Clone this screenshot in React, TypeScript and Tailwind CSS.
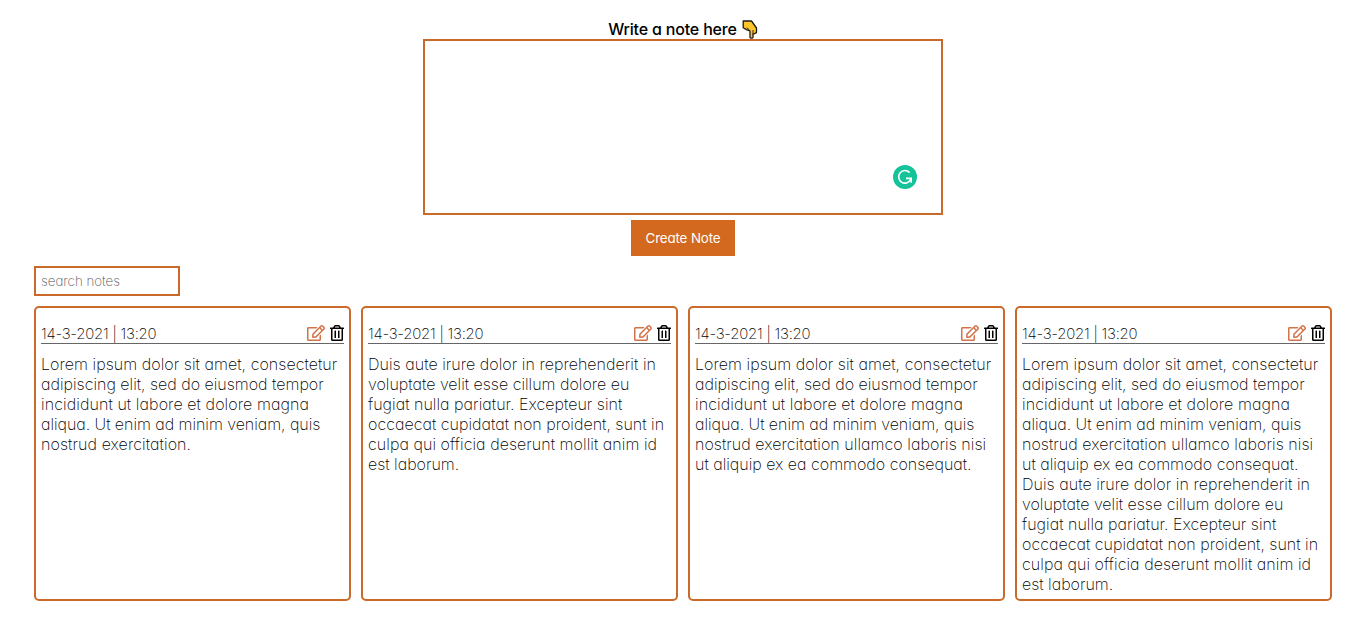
import { FaRegEdit, FaRegTrashAlt } from "react-icons/fa";

type Line = { text: string; spacing?: string };

const lorem: Line[] = [
  { text: "Lorem ipsum dolor sit amet, consectetur", spacing: "tracking-[0.05px]" },
  { text: "adipiscing elit, sed do eiusmod tempor" },
  { text: "incididunt ut labore et dolore magna", spacing: "tracking-[0.09px]" },
  { text: "aliqua. Ut enim ad minim veniam, quis", spacing: "tracking-[-0.04px]" },
];
const ullamco: Line[] = [
  { text: "nostrud exercitation ullamco laboris nisi", spacing: "tracking-[0.05px]" },
  { text: "ut aliquip ex ea commodo consequat." },
];
const duis: Line[] = [
  { text: "Duis aute irure dolor in reprehenderit in", spacing: "tracking-[0.04px]" },
  { text: "voluptate velit esse cillum dolore eu" },
  { text: "fugiat nulla pariatur. Excepteur sint", spacing: "tracking-[0.03px]" },
  { text: "occaecat cupidatat non proident, sunt in", spacing: "tracking-[0.02px]" },
  { text: "culpa qui officia deserunt mollit anim id", spacing: "tracking-[0.05px]" },
  { text: "est laborum." },
];

const notes: Line[][] = [
  [...lorem, { text: "nostrud exercitation.", spacing: "tracking-[0.09px]" }],
  duis,
  [...lorem, ...ullamco],
  [...lorem, ...ullamco, ...duis],
];

function PointingHand() {
  return (
    <svg viewBox="0 0 16 19" className="h-[19px] w-4" aria-label="Pointing down">
      <path
        d="M1.2 1h8.3l5 7v4.6l-2.2 1.2H11v3.4c0 1.2-3 1.2-3 0V11L4.5 9.6 1.2 7.8z"
        fill="#fdc52c"
        stroke="#1c1a17"
        strokeWidth="1.3"
        strokeLinejoin="round"
      />
      <path d="M11 13.8V10M5 7.6 8 11" fill="none" stroke="#1c1a17" strokeWidth="0.9" />
    </svg>
  );
}

function Note({ lines }: { lines: Line[] }) {
  return (
    <article className="h-[295px] rounded-[5px] border-2 border-[#c96a2b] px-[5px] pt-4">
      <header className="flex h-5 items-center justify-between border-b border-[#666]">
        <span className="pt-px text-[15px] tracking-[-0.25px]">14-3-2021 | 13:20</span>
        <span className="flex items-center gap-[5px] pb-px">
          <FaRegEdit className="h-[18px] w-[18px] text-[#d2734a]" />
          <FaRegTrashAlt className="h-4 w-[14px]" />
        </span>
      </header>
      <div className="mt-[10px] text-base leading-5 whitespace-nowrap">
        {lines.map((line) => (
          <p key={line.text} className={line.spacing}>
            {line.text}
          </p>
        ))}
      </div>
    </article>
  );
}

export default function App() {
  return (
    <main className="flex h-[620px] flex-col bg-white px-[34px] pt-[19px] font-['Inter',sans-serif] font-[250] text-black [font-feature-settings:'cv11']">
      <div className="flex flex-col items-center">
        <div className="flex h-5 items-center gap-[5px] text-base font-[450]">
          <span className="tracking-[-0.18px]">Write a note here</span>
          <PointingHand />
        </div>
        <div className="flex h-44 w-[520px] items-end justify-end border-2 border-[#c96a2b] p-6">
          <svg viewBox="0 0 24 24" className="h-6 w-6">
            <circle cx="12" cy="12" r="12" fill="#15c39a" />
            <path
              d="M16.6 7.6A6.3 6.3 0 1 0 17.6 14.6M13 13.4h5.2v4.4"
              fill="none"
              stroke="#fff"
              strokeWidth="1.6"
            />
          </svg>
        </div>
        <button className="mt-[5px] h-9 w-[104px] bg-[#d2691e] pt-0.5 text-[13.333px] font-[400] tracking-[-0.12px] text-white">
          Create Note
        </button>
      </div>
      <input
        placeholder="search notes"
        className="mt-[10px] h-[30px] w-[146px] border-2 border-[#c96a2b] px-[5px] pb-px text-[13.333px] placeholder:text-[#555]"
      />
      <section className="mt-[10px] grid grid-cols-4 gap-[10px]">
        {notes.map((lines, i) => (
          <Note key={i} lines={lines} />
        ))}
      </section>
    </main>
  );
}
